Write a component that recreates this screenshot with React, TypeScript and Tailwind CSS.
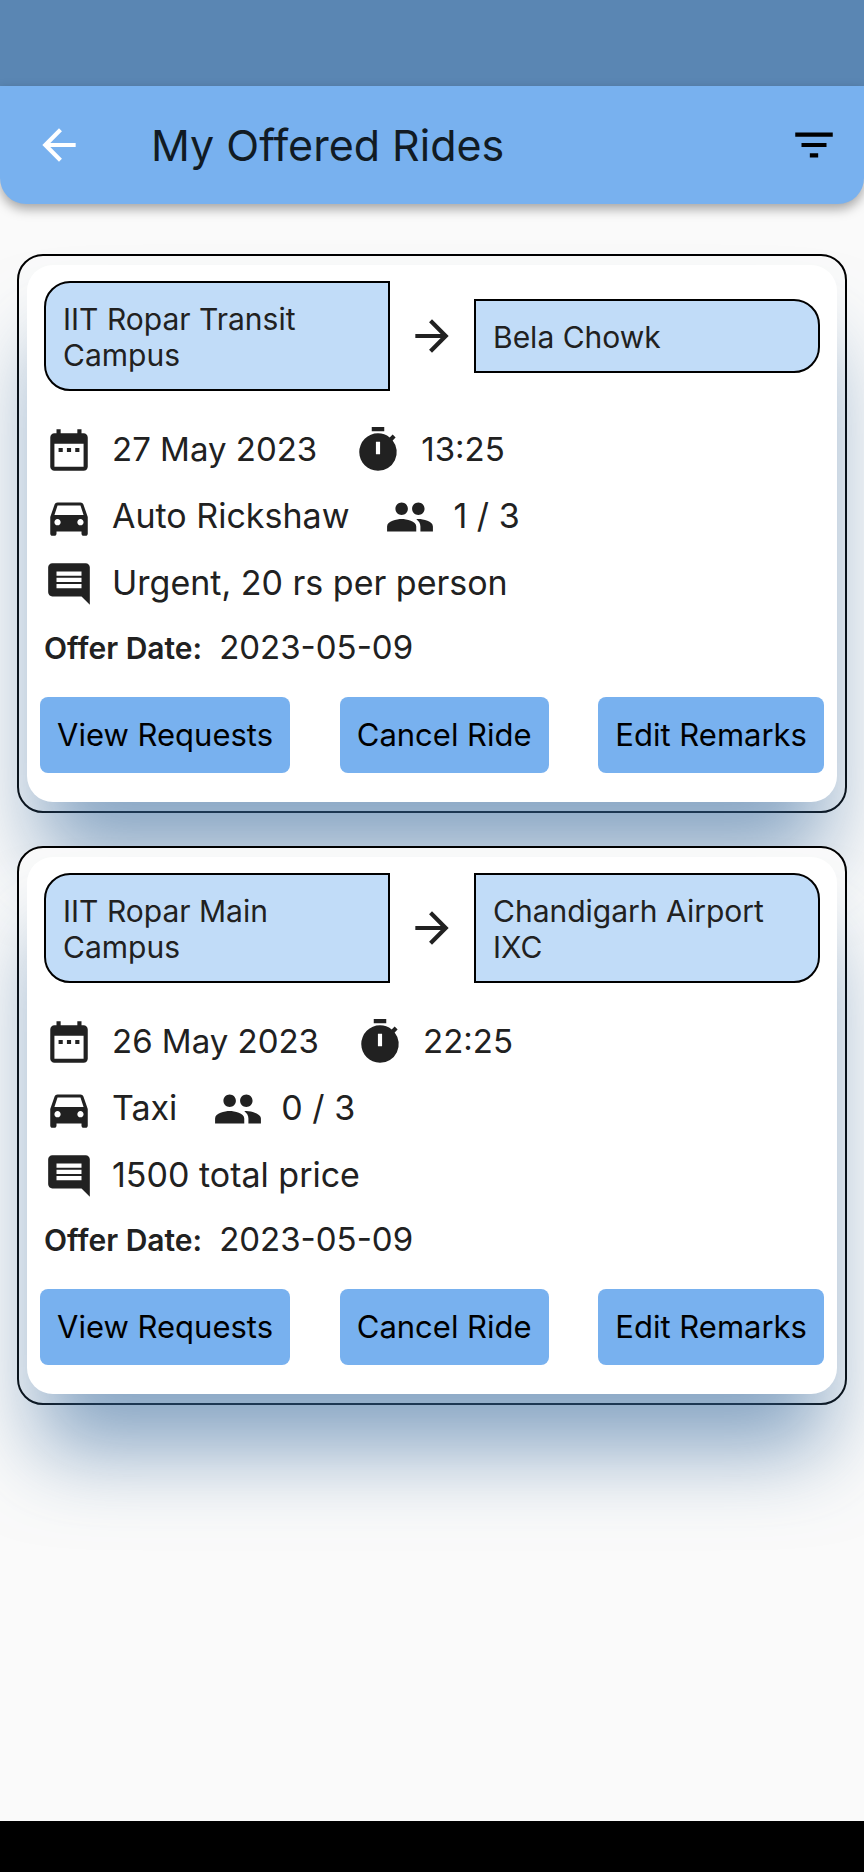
import type { ReactNode } from "react";
import {
  MdArrowBack,
  MdArrowForward,
  MdComment,
  MdDateRange,
  MdDirectionsCar,
  MdFilterList,
  MdPeople,
  MdTimer,
} from "react-icons/md";

type Ride = {
  from: string;
  to: string;
  date: string;
  time: string;
  vehicle: string;
  seats: string;
  remarks: string;
  offered: string;
};

const rides: Ride[] = [
  {
    from: "IIT Ropar Transit Campus",
    to: "Bela Chowk",
    date: "27 May 2023",
    time: "13:25",
    vehicle: "Auto Rickshaw",
    seats: "1 / 3",
    remarks: "Urgent, 20 rs per person",
    offered: "2023-05-09",
  },
  {
    from: "IIT Ropar Main Campus",
    to: "Chandigarh Airport IXC",
    date: "26 May 2023",
    time: "22:25",
    vehicle: "Taxi",
    seats: "0 / 3",
    remarks: "1500 total price",
    offered: "2023-05-09",
  },
];

function Detail({ icon, children }: { icon: ReactNode; children: ReactNode }) {
  return (
    <div className="flex items-center gap-[18px]">
      <span className="shrink-0 text-[50px]">{icon}</span>
      <span className="pb-0.5 leading-[48px]">{children}</span>
    </div>
  );
}

function ActionButton({ children }: { children: ReactNode }) {
  return (
    <button
      type="button"
      className="h-[76px] rounded-lg bg-[#78b1ef] px-[17px] text-[31px] whitespace-nowrap text-black"
    >
      {children}
    </button>
  );
}

function RideCard({ ride }: { ride: Ride }) {
  return (
    <article className="rounded-[26px] border-2 border-black bg-[#fafafa] px-2 py-[9px]">
      <div className="rounded-[26px] bg-white pt-4 pb-[29px] shadow-[0_68px_84px_-12px_rgba(56,106,158,0.6)]">
        <div className="flex items-center px-[17px] text-[30px] leading-9">
          <div className="flex-1 rounded-l-[26px] border-2 border-black bg-[#c1dcf8] px-[17px] pt-[18px] pb-4">
            {ride.from}
          </div>
          <MdArrowForward className="mx-[17px] shrink-0 text-[50px]" />
          <div className="flex-1 rounded-r-[26px] border-2 border-black bg-[#c1dcf8] px-[17px] pt-[18px] pb-4">
            {ride.to}
          </div>
        </div>
        <div className="mt-[34px] flex flex-col gap-[17px] px-[17px] text-[34px]">
          <div className="flex gap-9 text-[33px]">
            <Detail icon={<MdDateRange />}>{ride.date}</Detail>
            <Detail icon={<MdTimer />}>{ride.time}</Detail>
          </div>
          <div className="flex gap-9">
            <Detail icon={<MdDirectionsCar />}>{ride.vehicle}</Detail>
            <Detail icon={<MdPeople />}>{ride.seats}</Detail>
          </div>
          <Detail icon={<MdComment />}>{ride.remarks}</Detail>
        </div>
        <div className="mt-5 flex h-9 items-baseline gap-[17px] px-[17px] leading-9">
          <span className="text-[30px] font-semibold">Offer Date:</span>
          <span className="text-[33px]">{ride.offered}</span>
        </div>
        <div className="mt-8 flex justify-between px-[13px]">
          <ActionButton>View Requests</ActionButton>
          <ActionButton>Cancel Ride</ActionButton>
          <ActionButton>Edit Remarks</ActionButton>
        </div>
      </div>
    </article>
  );
}

export default function App() {
  return (
    <div className="flex min-h-screen flex-col overflow-x-hidden bg-[#fafafa] font-[Inter,sans-serif] text-[#212121]">
      <div className="h-[86px] bg-[#5a86b3]" />
      <header className="flex h-[118px] items-center rounded-b-[26px] bg-[#78b1ef] pr-[25px] pl-[34px] shadow-[0_5px_12px_rgba(0,0,0,0.35)]">
        <button type="button" aria-label="Back" className="text-[50px] text-white">
          <MdArrowBack />
        </button>
        <h1 className="ml-[67px] flex-1 text-[43px] leading-[52px] text-[#111b24]">My Offered Rides</h1>
        <button type="button" aria-label="Filter rides" className="text-[50px] text-black">
          <MdFilterList />
        </button>
      </header>
      <main className="flex flex-1 flex-col gap-[33px] px-[17px] pt-[50px]">
        {rides.map((ride) => (
          <RideCard key={ride.from} ride={ride} />
        ))}
      </main>
      <footer className="h-[51px] bg-black" />
    </div>
  );
}
